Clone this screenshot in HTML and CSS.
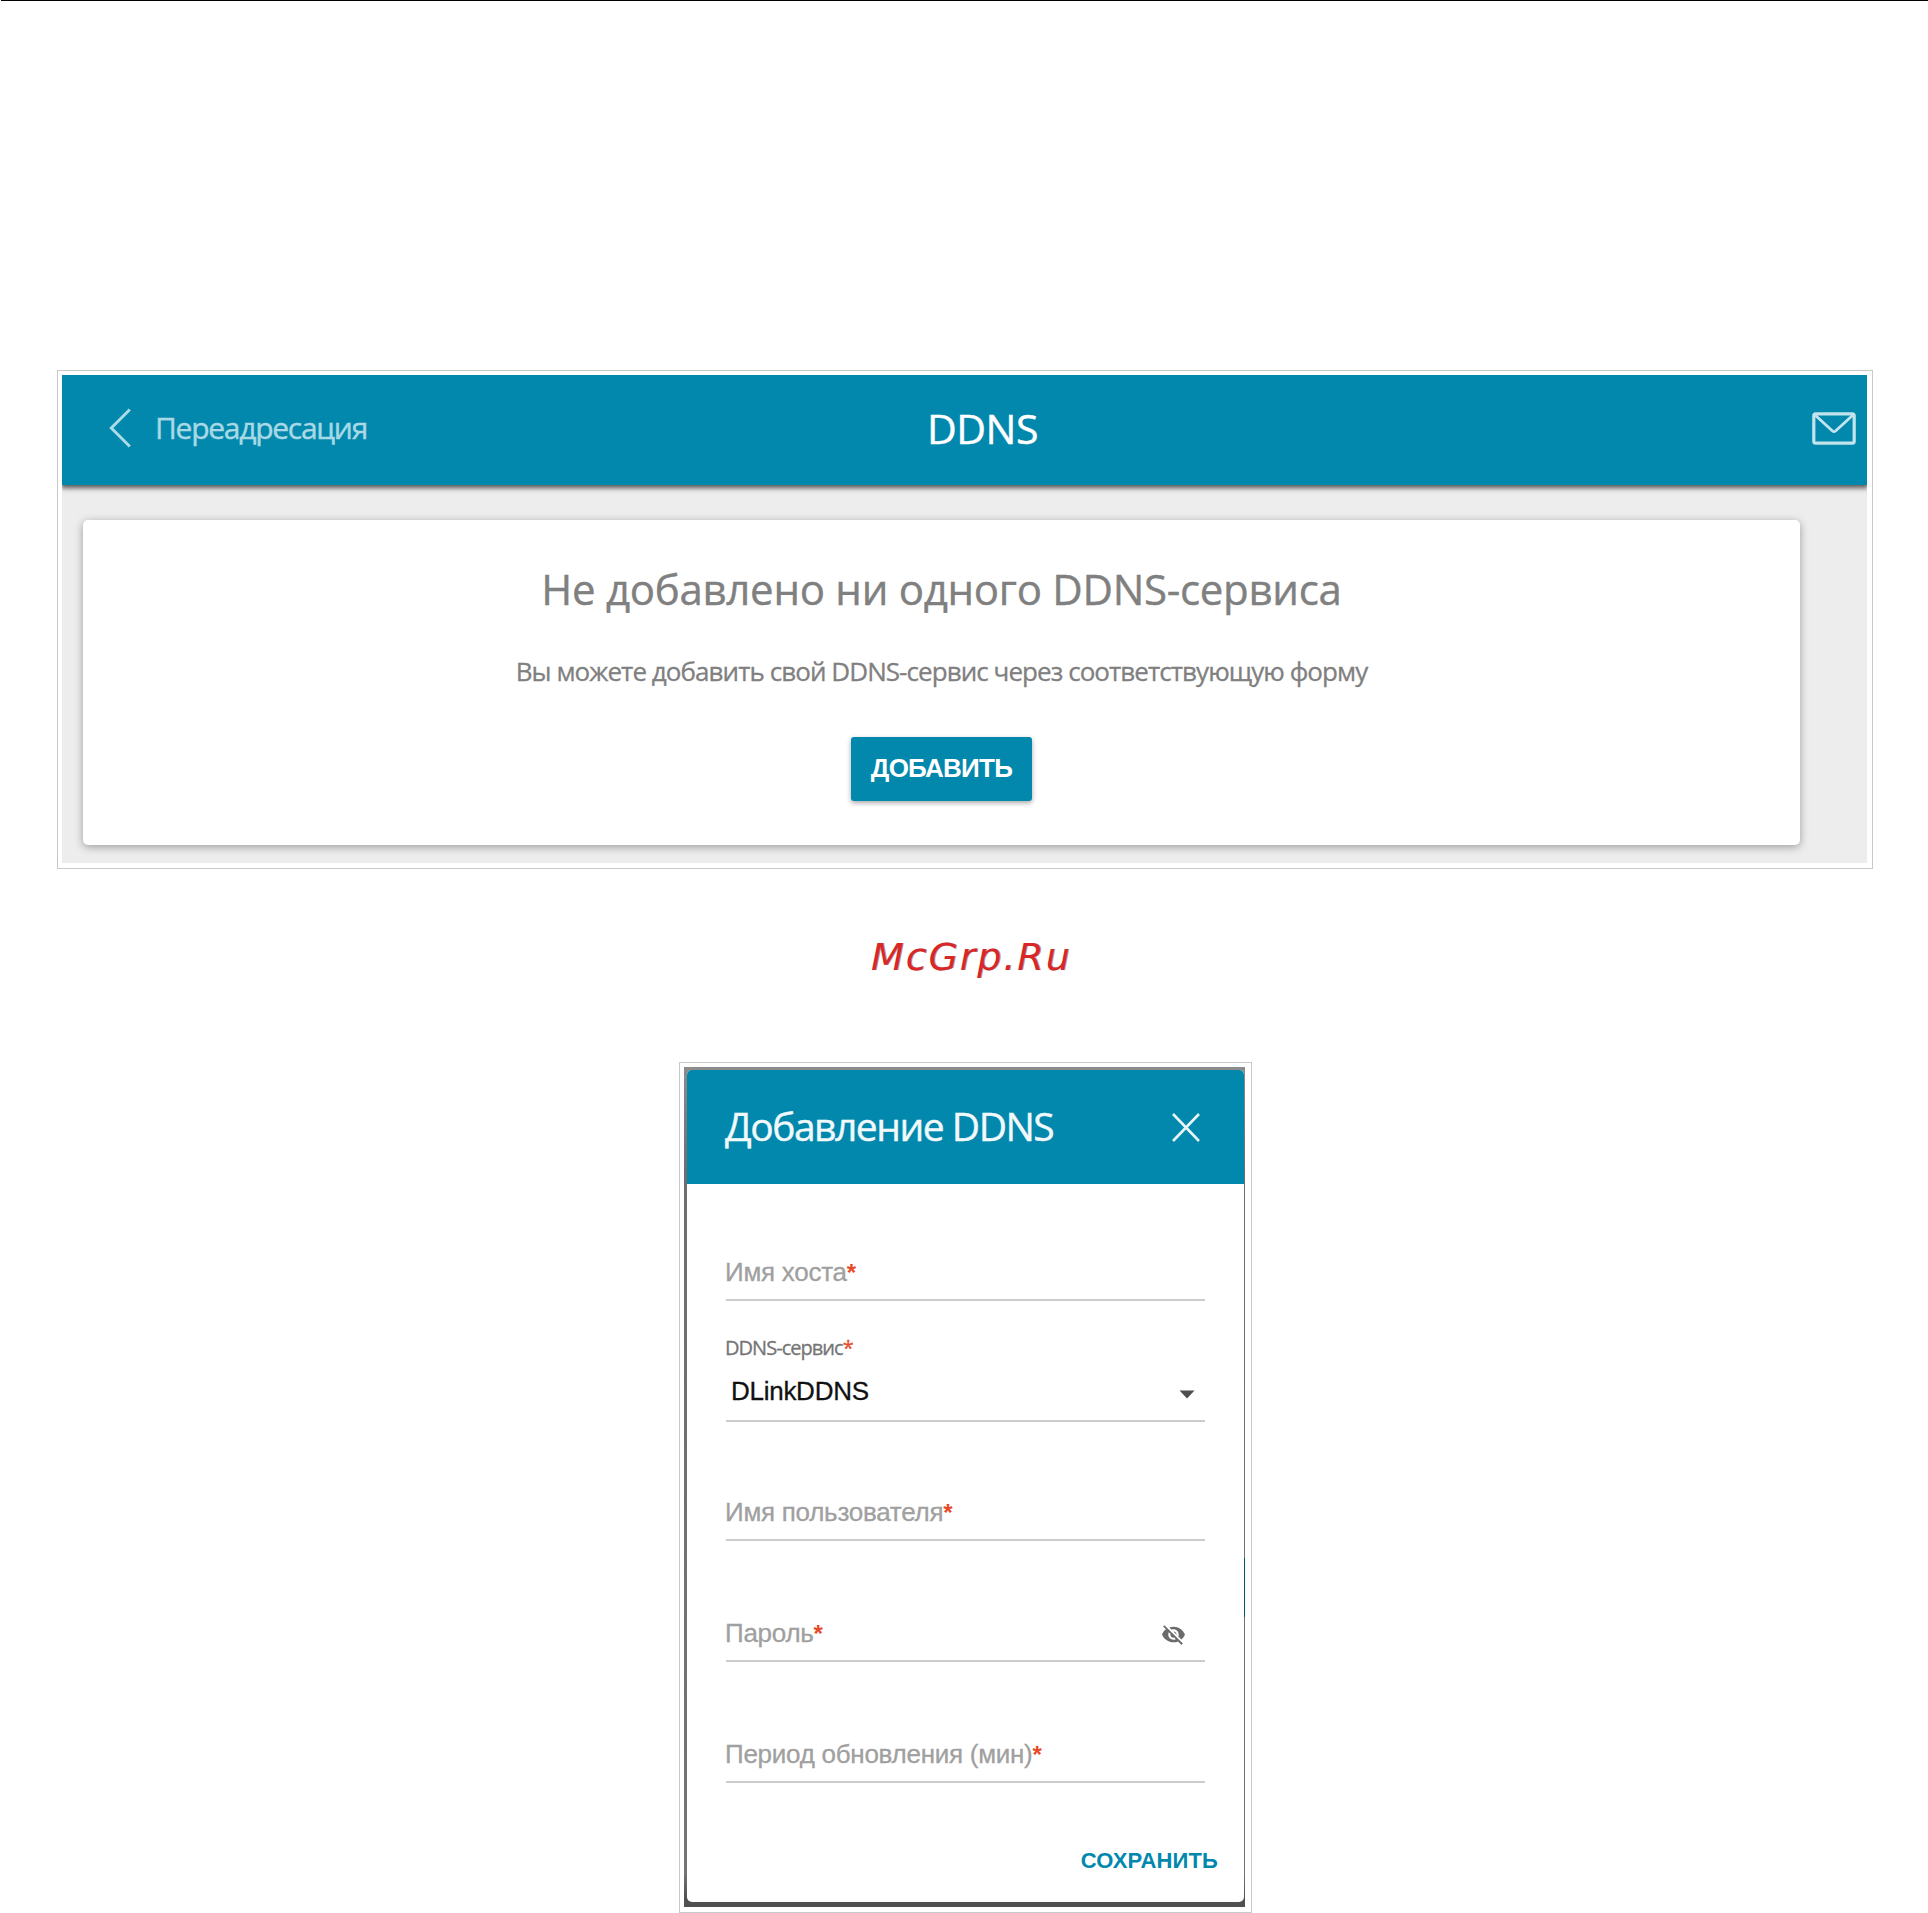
FILE: index.html
```html
<!DOCTYPE html>
<html lang="ru">
<head>
  <meta charset="UTF-8">
  <meta name="viewport" content="width=device-width, initial-scale=1.0">
  <title>DDNS</title>
  <link rel="stylesheet" href="styles.css">
</head>
<body>
  <div class="page">
    <div class="frame frame--page">
      <div class="screen">
        <div class="topbar">
          <a class="topbar__back">
            <svg width="22" height="40" viewBox="0 0 22 40" fill="none" stroke="#aadbe6" stroke-width="3"><path d="M20.8 1.5L2.3 20L20.8 38.5"/></svg>
            <span class="topbar__back-text">Переадресация</span>
          </a>
          <h1 class="topbar__title">DDNS</h1>
          <svg class="topbar__mail" width="44" height="33" viewBox="0 0 44 33" fill="none" stroke="#c2e4ec" stroke-width="3.2" stroke-linejoin="round"><rect x="1.8" y="1.8" width="40.4" height="29.4" rx="2"/><path d="M3 3L20.5 19Q22 20.3 23.5 19L41 3" stroke-width="2.8"/></svg>
        </div>
        <div class="card">
          <h2 class="card__title">Не добавлено ни одного DDNS-сервиса</h2>
          <p class="card__text">Вы можете добавить свой DDNS-сервис через соответствующую форму</p>
          <button class="card__button">ДОБАВИТЬ</button>
        </div>
      </div>
    </div>

    <div class="watermark">McGrp.Ru</div>

    <div class="frame frame--dialog">
      <div class="overlay">
        <div class="dialog">
          <div class="dialog__header">
            <h2 class="dialog__title">Добавление DDNS</h2>
            <svg class="dialog__close" width="28" height="29" viewBox="0 0 28 29" stroke="#e8f5f8" stroke-width="2.6"><path d="M1 1L27 28M27 1L1 28"/></svg>
          </div>
          <div class="dialog__body">
            <div class="field field--host">
              <div class="field__name">Имя хоста<span class="required">*</span></div>
            </div>
            <div class="field field--service">
              <div class="field__label">DDNS-сервис<span class="required">*</span></div>
              <div class="field__row">
                <div class="field__value">DLinkDDNS</div>
                <svg class="field__arrow" width="16" height="9" viewBox="0 0 16 9" fill="#4d4d4d"><path d="M0.5 0.5H15.5L8 8.5Z"/></svg>
              </div>
            </div>
            <div class="field field--user">
              <div class="field__name">Имя пользователя<span class="required">*</span></div>
            </div>
            <div class="field field--password">
              <div class="field__row">
                <div class="field__name">Пароль<span class="required">*</span></div>
                <svg class="field__eye" width="25" height="25" viewBox="0 0 24 24" fill="#6b6b6b"><path d="M12 7c2.76 0 5 2.24 5 5 0 .65-.13 1.26-.36 1.83l2.92 2.92c1.51-1.26 2.7-2.89 3.43-4.75-1.73-4.39-6-7.5-11-7.5-1.4 0-2.74.25-3.98.7l2.16 2.16C10.74 7.13 11.35 7 12 7zM2 4.27l2.28 2.28.46.46C3.08 8.3 1.78 10.02 1 12c1.73 4.39 6 7.5 11 7.5 1.55 0 3.03-.3 4.38-.84l.42.42L19.73 22 21 20.73 3.27 3 2 4.27zM7.53 9.8l1.55 1.55c-.05.21-.08.43-.08.65 0 1.66 1.34 3 3 3 .22 0 .44-.03.65-.08l1.55 1.55c-.67.33-1.41.53-2.2.53-2.76 0-5-2.24-5-5 0-.79.2-1.53.53-2.2zm4.31-.78l3.15 3.15.02-.16c0-1.66-1.34-3-3-3l-.17.01z"/></svg>
              </div>
            </div>
            <div class="field field--period">
              <div class="field__name">Период обновления (мин)<span class="required">*</span></div>
            </div>
          </div>
          <div class="dialog__footer">
            <button class="dialog__save">СОХРАНИТЬ</button>
          </div>
        </div>
      </div>
    </div>
  </div>
</body>
</html>
```
FILE: styles.css
```css
* {
  box-sizing: border-box;
}

body {
  margin: 0;
  background: #fff;
  font-family: "Open Sans", "Noto Sans", sans-serif;
}

h1, h2, p {
  margin: 0;
  font-weight: 400;
}

button {
  border: 0;
  padding: 0;
  font-family: "Liberation Sans", Arial, sans-serif;
  font-weight: 700;
}

svg {
  display: block;
  flex: none;
}

.page {
  display: flex;
  flex-direction: column;
  height: 1913px;
  margin-left: 1px;
  border-top: 1px solid #000;
}

.frame {
  flex: none;
  border: 1px solid #c8c8c8;
}

/* Page with the list of services */
.frame--page {
  width: 1816px;
  height: 499px;
  margin: 369px 0 0 56px;
  padding: 4px 5px 5px 4px;
}

.screen {
  height: 488px;
  background: #ededed;
  overflow: hidden;
}

.topbar {
  display: grid;
  grid-template-columns: 1fr auto 1fr;
  align-items: center;
  height: 110px;
  padding: 0 11px 4px 47px;
  background: #0288ad;
  color: #fff;
  box-shadow: 0 2px 5px 1px rgba(0, 0, 0, .65);
}

.topbar__back {
  display: flex;
  align-items: center;
  gap: 24px;
  color: #a8d9e5;
}

.topbar__back-text {
  font-size: 30px;
  line-height: 40px;
  letter-spacing: -1.27px;
  -webkit-text-stroke: .4px;
}

.topbar__title {
  font-size: 41px;
  line-height: 60px;
  letter-spacing: -.5px;
  -webkit-text-stroke: .4px;
}

.topbar__mail {
  justify-self: end;
}

.card {
  display: flex;
  flex-direction: column;
  align-items: center;
  width: 1717px;
  height: 325px;
  margin: 35px 0 0 21px;
  padding-top: 39px;
  border-radius: 5px;
  background: #fff;
  color: #808080;
  box-shadow: 0 2px 9px rgba(0, 0, 0, .35);
}

.card__title {
  font-size: 42px;
  line-height: 60px;
  letter-spacing: -.28px;
  -webkit-text-stroke: .4px;
}

.card__text {
  margin-top: 34px;
  font-size: 26px;
  line-height: 36px;
  letter-spacing: -.94px;
  -webkit-text-stroke: .3px;
}

.card__button {
  width: 181px;
  height: 64px;
  margin-top: 48px;
  padding-bottom: 1px;
  border-radius: 3px;
  background: #0288ad;
  color: #fff;
  font-size: 26px;
  letter-spacing: -.75px;
  box-shadow: 0 2px 5px rgba(0, 0, 0, .35);
}

.watermark {
  margin: 58px 0 75px 870px;
  color: #d92626;
  font: italic 38px/60px "DejaVu Sans", sans-serif;
  letter-spacing: 1.9px;
  text-shadow: 1px 0 0 rgba(60, 20, 20, .45);
}

/* Add service dialog */
.frame--dialog {
  width: 573px;
  height: 851px;
  margin-left: 678px;
  padding: 4px 6px 5px 4px;
}

/* The page behind shows through as a thin strip on the right */
.overlay {
  height: 840px;
  padding: 3px 1px 5px 3px;
  background:
    linear-gradient(#02566d, #02566d) right 491px / 1px 59px no-repeat,
    linear-gradient(#8c8c8c, #6e6e6e 12%, #747474 96%, #505050 99%);
}

.dialog {
  height: 832px;
  border-radius: 5px;
  background: #fff;
  overflow: hidden;
}

.dialog__header {
  display: flex;
  align-items: center;
  justify-content: space-between;
  height: 114px;
  padding: 0 44px 3px 38px;
  background: #0288ad;
  color: #f1f9fb;
}

.dialog__title {
  font-size: 39px;
  line-height: 56px;
  letter-spacing: -1.48px;
  -webkit-text-stroke: .4px;
}

.dialog__close {
  margin-top: 3px;
}

.dialog__body {
  padding: 0 39px;
  font-family: "Liberation Sans", Arial, sans-serif;
  font-size: 26px;
  line-height: 30px;
  letter-spacing: -.27px;
}

.field {
  display: flex;
  flex-direction: column;
  justify-content: flex-end;
  height: 121px;
  padding-bottom: 11px;
  border-bottom: 2px solid #ccc;
  color: #a0a0a0;
}

.field--host {
  height: 117px;
}

.field--service {
  padding-bottom: 14px;
}

.field--user {
  height: 119px;
}

.field__row {
  display: flex;
  align-items: center;
  justify-content: space-between;
}

.field__name,
.field__label {
  margin-left: -1px;
}

.field__name {
  -webkit-text-stroke: .3px;
}

.field__label {
  margin-bottom: 14px;
  color: #757575;
  font-family: "Open Sans", "Noto Sans", sans-serif;
  font-size: 20px;
  line-height: 28px;
  letter-spacing: -.97px;
  -webkit-text-stroke: .3px;
}

.field__value {
  padding-left: 5px;
  color: #111;
  -webkit-text-stroke: .3px;
}

.field__arrow {
  margin: 6px 10px 0 0;
}

.field__eye {
  margin: 1px 19px 0 0;
}

.required {
  color: #e84a27;
}

.field__name .required {
  font-size: 24px;
  font-weight: 700;
  -webkit-text-stroke: 0;
}

.dialog__footer {
  display: flex;
  justify-content: flex-end;
  padding: 63px 26px 0 0;
}

.dialog__save {
  background: none;
  color: #0288ad;
  font-size: 22px;
  line-height: 30px;
  letter-spacing: .15px;
}
```
